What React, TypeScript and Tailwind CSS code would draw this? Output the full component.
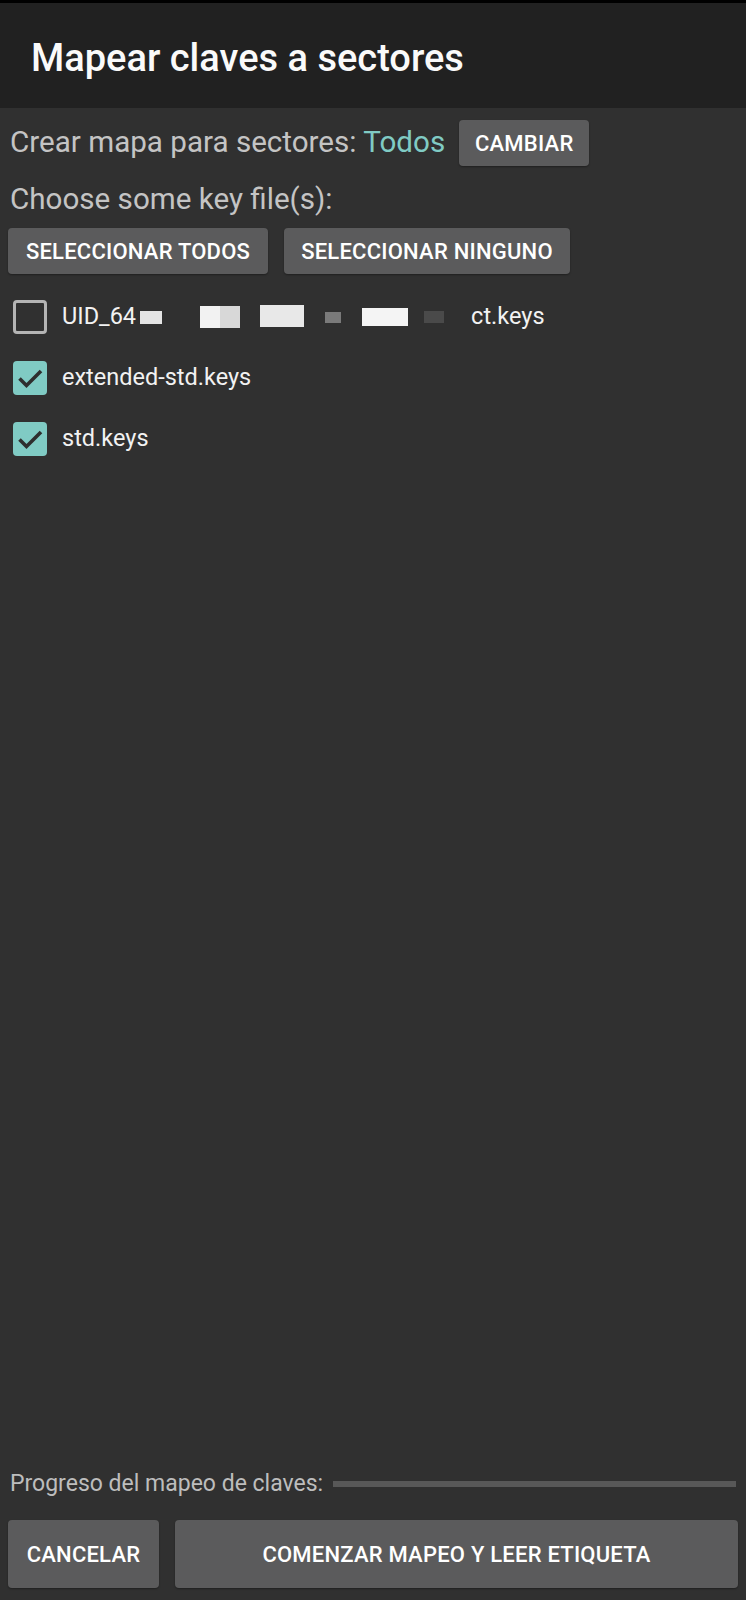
import React from "react";

function CheckBox({ checked }: { checked: boolean }) {
  if (!checked) {
    return (
      <div className="h-[34px] w-[34px] shrink-0 rounded-[4px] border-[3px] border-[#b4b4b4]" />
    );
  }
  return (
    <svg width="34" height="34" viewBox="0 0 34 34" className="shrink-0">
      <rect x="0" y="0" width="34" height="34" rx="4" fill="#80cbc4" />
      <path
        d="M6.5 17.5 L13.5 24.5 L28 10"
        fill="none"
        stroke="#2e2e2e"
        strokeWidth="3.6"
      />
    </svg>
  );
}

function Button({ label, className }: { label: string; className?: string }) {
  return (
    <button
      className={
        "flex items-center justify-center rounded-[4px] bg-[#5b5b5c] text-[22px] font-medium tracking-[0.01em] text-white shadow-[0_1px_2px_rgba(0,0,0,0.35)] " +
        (className ?? "")
      }
    >
      {label}
    </button>
  );
}

export default function App() {
  const files = [
    { name: "extended-std.keys", checked: true },
    { name: "std.keys", checked: true },
  ];

  return (
    <div className="flex h-[1600px] w-[746px] flex-col bg-[#303030] font-['Roboto',sans-serif]">
      <div className="h-[3px] bg-black" />

      {/* Title bar */}
      <header className="flex h-[105px] items-center bg-[#212121] pl-[31px] pt-[5px]">
        <h1 className="text-[38px] font-medium leading-none text-[#fafafa]">
          Mapear claves a sectores
        </h1>
      </header>

      <main className="flex flex-1 flex-col px-2">
        <div className="mt-3 flex h-[46px] items-center">
          <span className="ml-[2px] text-[29.6px] leading-none text-[#c4c4c4]">
            Crear mapa para sectores: <span className="text-[#80cbc4]">Todos</span>
          </span>
          <Button label="CAMBIAR" className="ml-[14px] h-[46px] w-[130px]" />
        </div>

        <p className="mt-[15px] ml-[2px] h-[36px] text-[29.6px] leading-[36px] text-[#c4c4c4]">
          Choose some key file(s):
        </p>

        <div className="mt-[11px] flex gap-4">
          <Button label="SELECCIONAR TODOS" className="h-[46px] w-[260px]" />
          <Button label="SELECCIONAR NINGUNO" className="h-[46px] w-[286px]" />
        </div>

        {/* Key files */}
        <ul className="mt-[12px] flex flex-col">
          <li className="flex h-[61px] items-center">
            <div className="ml-[5px]">
              <CheckBox checked={false} />
            </div>
            <span className="ml-[15px] text-[23.5px] text-[#f2f2f2]">UID_64</span>
            <div className="relative h-[30px] w-[335px]">
              <div className="absolute left-[4px] top-[9px] h-[13px] w-[22px] bg-[#e4e4e4]" />
              <div className="absolute left-[64px] top-[4px] h-[22px] w-[20px] bg-[#f2f2f2]" />
              <div className="absolute left-[84px] top-[4px] h-[22px] w-[20px] bg-[#d8d8d8]" />
              <div className="absolute left-[124px] top-[3px] h-[22px] w-[44px] bg-[#e8e8e8]" />
              <div className="absolute left-[189px] top-[10px] h-[11px] w-[16px] bg-[#7a7a7a]" />
              <div className="absolute left-[226px] top-[6px] h-[18px] w-[46px] bg-[#f4f4f4]" />
              <div className="absolute left-[288px] top-[9px] h-[12px] w-[20px] bg-[#4a4a4a]" />
            </div>
            <span className="text-[23.5px] text-[#f2f2f2]">ct.keys</span>
          </li>
          {files.map((f) => (
            <li key={f.name} className="flex h-[61px] items-center">
              <div className="ml-[5px]">
                <CheckBox checked={f.checked} />
              </div>
              <span className="ml-[15px] text-[23.5px] text-[#f2f2f2]">{f.name}</span>
            </li>
          ))}
        </ul>

        <div className="flex-1" />

        {/* Progress */}
        <div className="flex h-[36px] items-center">
          <span className="ml-[2px] text-[23px] text-[#bdbdbd]">
            Progreso del mapeo de claves:
          </span>
          <div className="ml-[10px] mr-[2px] h-[6px] flex-1 bg-[#585858]" />
        </div>

        <div className="mt-[18px] mb-3 flex gap-4">
          <Button label="CANCELAR" className="h-[68px] w-[151px]" />
          <Button label="COMENZAR MAPEO Y LEER ETIQUETA" className="h-[68px] flex-1" />
        </div>
      </main>
    </div>
  );
}
